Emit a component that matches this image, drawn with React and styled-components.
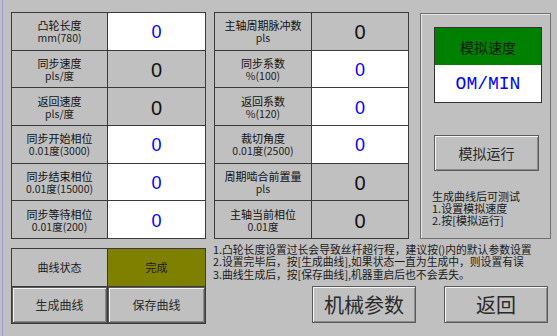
import React from "react";
import styled, { createGlobalStyle } from "styled-components";

const GlobalStyle = createGlobalStyle`
  html, body {
    margin: 0;
    padding: 0;
    background: #c0c0c0;
  }
  body {
    font-family: "Noto Sans CJK SC", "Liberation Sans", sans-serif;
    color: #111;
  }
`;

const Screen = styled.div`
  width: 557px;
  height: 336px;
  box-sizing: border-box;
  background: #c0c0c0;
  box-shadow: inset 2px 0 0 #c0c0c0, inset 3px 0 0 #9a9ad2;
  padding: 12px 0 0 11px;
  overflow: hidden;
`;

const TopRow = styled.div`
  display: flex;
  align-items: flex-start;
`;

const ParamTable = styled.div`
  display: grid;
  grid-template-columns: ${(p) => p.$cols};
  grid-template-rows: repeat(${(p) => p.$rows}, 1fr);
  gap: 1px;
  padding: 1px;
  width: 195px;
  height: ${(p) => p.$height}px;
  box-sizing: border-box;
  background: #3a3a3a;
  margin-left: ${(p) => p.$ml || 0}px;
  margin-top: ${(p) => p.$mt || 0}px;
  flex-shrink: 0;
`;

const LabelCell = styled.div`
  background: #c0c0c0;
  display: flex;
  flex-direction: column;
  align-items: center;
  justify-content: center;
  text-align: center;
  white-space: nowrap;
  padding-top: 1px;
`;

const Title = styled.div`
  font-size: 11px;
  line-height: 13px;
  height: 13px;
`;

const SubLine = styled.div`
  font-size: 10.5px;
  line-height: 12px;
  height: 12px;
  color: #222;
`;

const ValueCell = styled.div`
  background: ${(p) => (p.$edit ? "#ffffff" : "#c0c0c0")};
  color: ${(p) => (p.$edit ? "#0000ff" : "#111")};
  display: flex;
  align-items: center;
  justify-content: center;
  font-family: "Liberation Sans", sans-serif;
  font-size: ${(p) => (p.$edit ? 18 : 20)}px;
  padding-top: 3px;
  box-sizing: border-box;
`;

const SidePanel = styled.div`
  width: 131px;
  height: 226px;
  margin: 1px 0 0 11px;
  box-sizing: border-box;
  border: 1px solid #6f6f6f;
  box-shadow: inset 1px 1px 0 #e6e6e6;
  padding: 13px 0 0 13px;
  display: flex;
  flex-direction: column;
  flex-shrink: 0;
`;

const SpeedBox = styled.div`
  width: 106px;
  border: 1px solid #333;
  display: grid;
  grid-template-rows: 37px 37px;
`;

const SpeedTitle = styled.div`
  background: #008000;
  color: #0a1a0a;
  display: flex;
  align-items: center;
  justify-content: center;
  font-size: 14px;
`;

const SpeedValue = styled.div`
  background: #ffffff;
  color: #0000ff;
  display: flex;
  align-items: center;
  justify-content: center;
  font-family: "Liberation Mono", monospace;
  font-size: 18px;
`;

const RaisedButton = styled.div`
  background: #c0c0c0;
  border: 1px solid #5a5a5a;
  box-shadow: inset 1px 1px 0 #f4f4f4, inset -1px -1px 0 #8a8a8a;
  display: flex;
  align-items: center;
  justify-content: center;
  color: #2a2a2a;
  font-size: ${(p) => p.$size || 12}px;
  width: ${(p) => (p.$w ? `${p.$w}px` : "auto")};
  height: ${(p) => (p.$h ? `${p.$h}px` : "auto")};
  margin-top: ${(p) => p.$mt || 0}px;
  box-sizing: border-box;
  flex-shrink: 0;
`;

const PanelNote = styled.div`
  margin: 19px 0 0 -2px;
`;

const NoteLine = styled.div`
  font-size: ${(p) => p.$size || 11}px;
  line-height: ${(p) => p.$lh || 12}px;
  height: ${(p) => p.$lh || 12}px;
  white-space: nowrap;
  color: #1a1a1a;
`;

const BottomRow = styled.div`
  display: flex;
  align-items: flex-start;
  margin-top: 4px;
`;

const StatusCell = styled.div`
  background: ${(p) => p.$bg || "#c0c0c0"};
  display: flex;
  align-items: center;
  justify-content: center;
  font-size: 11px;
  color: #1a1a1a;
`;

const BottomSide = styled.div`
  margin-left: 7px;
  display: flex;
  flex-direction: column;
`;

const ButtonRow = styled.div`
  display: flex;
  gap: 28px;
  margin: 6px 0 0 99px;
`;

const leftRows = [
  { title: "凸轮长度", sub: "mm(780)", edit: true },
  { title: "同步速度", sub: "pls/度", edit: false },
  { title: "返回速度", sub: "pls/度", edit: false },
  { title: "同步开始相位", sub: "0.01度(3000)", edit: true },
  { title: "同步结束相位", sub: "0.01度(15000)", edit: true },
  { title: "同步等待相位", sub: "0.01度(200)", edit: true },
];

const midRows = [
  { title: "主轴周期脉冲数", sub: "pls", edit: false },
  { title: "同步系数", sub: "%(100)", edit: true },
  { title: "返回系数", sub: "%(120)", edit: true },
  { title: "裁切角度", sub: "0.01度(2500)", edit: true },
  { title: "周期啮合前置量", sub: "pls", edit: false },
  { title: "主轴当前相位", sub: "0.01度", edit: false },
];

const panelNotes = ["生成曲线后可测试", "1.设置模拟速度", "2.按[模拟运行]"];

const notes = [
  "1.凸轮长度设置过长会导致丝杆超行程，建议按()内的默认参数设置",
  "2.设置完毕后，按[生成曲线],如果状态一直为生成中，则设置有误",
  "3.曲线生成后，按[保存曲线],机器重启后也不会丢失。",
];

const renderRows = (rows) =>
  rows.map((r) => (
    <React.Fragment key={r.title}>
      <LabelCell>
        <Title>{r.title}</Title>
        <SubLine>{r.sub}</SubLine>
      </LabelCell>
      <ValueCell $edit={r.edit}>0</ValueCell>
    </React.Fragment>
  ));

function App() {
  return (
    <>
      <GlobalStyle />
      <Screen>
        <TopRow>
          <ParamTable $cols="95px 97px" $rows={6} $height={227}>
            {renderRows(leftRows)}
          </ParamTable>
          <ParamTable $cols="96px 96px" $rows={6} $height={227} $ml={8}>
            {renderRows(midRows)}
          </ParamTable>
          <SidePanel>
            <SpeedBox>
              <SpeedTitle>模拟速度</SpeedTitle>
              <SpeedValue>OM/MIN</SpeedValue>
            </SpeedBox>
            <RaisedButton $w={105} $h={36} $size={14} $mt={32}>
              模拟运行
            </RaisedButton>
            <PanelNote>
              {panelNotes.map((n) => (
                <NoteLine key={n}>{n}</NoteLine>
              ))}
            </PanelNote>
          </SidePanel>
        </TopRow>
        <BottomRow>
          <ParamTable $cols="95px 97px" $rows={2} $height={76} $mt={5}>
            <StatusCell>曲线状态</StatusCell>
            <StatusCell $bg="#808000">完成</StatusCell>
            <RaisedButton>生成曲线</RaisedButton>
            <RaisedButton>保存曲线</RaisedButton>
          </ParamTable>
          <BottomSide>
            <div>
              {notes.map((n) => (
                <NoteLine key={n} $size={10.8} $lh={12.4}>
                  {n}
                </NoteLine>
              ))}
            </div>
            <ButtonRow>
              <RaisedButton $w={104} $h={37} $size={20}>
                机械参数
              </RaisedButton>
              <RaisedButton $w={104} $h={37} $size={20}>
                返回
              </RaisedButton>
            </ButtonRow>
          </BottomSide>
        </BottomRow>
      </Screen>
    </>
  );
}

export default App;
